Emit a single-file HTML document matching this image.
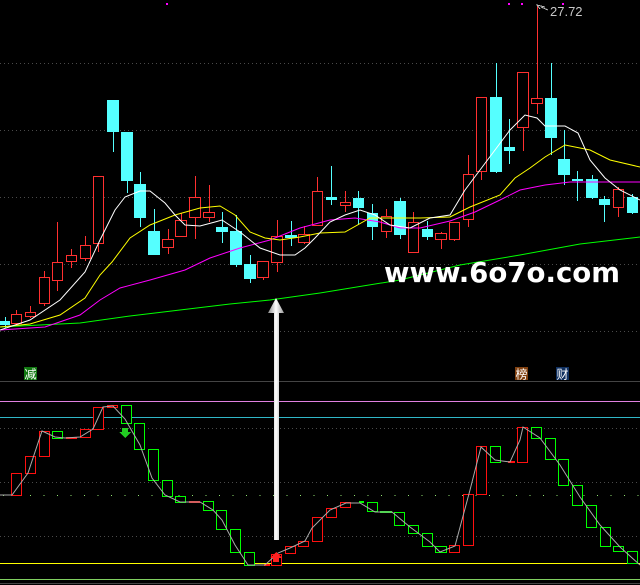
<!DOCTYPE html>
<html><head><meta charset="utf-8"><style>
html,body{margin:0;padding:0;background:#000;width:640px;height:585px;overflow:hidden}
svg{display:block}
</style></head><body>
<svg id="s" width="640" height="585" viewBox="0 0 640 585" xmlns="http://www.w3.org/2000/svg" shape-rendering="crispEdges">
<rect width="640" height="585" fill="#000"/>
<g id="grid" stroke="#4a4a4a" stroke-dasharray="1 3" stroke-width="1">
<line x1="0" y1="63.5" x2="640" y2="63.5"/><line x1="0" y1="130.5" x2="640" y2="130.5"/><line x1="0" y1="197.5" x2="640" y2="197.5"/><line x1="0" y1="264.5" x2="640" y2="264.5"/><line x1="0" y1="331.5" x2="640" y2="331.5"/>
<line x1="0" y1="428.5" x2="640" y2="428.5"/><line x1="0" y1="482.5" x2="640" y2="482.5"/><line x1="0" y1="536.5" x2="640" y2="536.5"/>
</g>
<rect x="0" y="381" width="640" height="1" fill="#444"/>
<rect x="0" y="401" width="640" height="1" fill="#e080e0"/>
<rect x="0" y="417" width="640" height="1" fill="#30b8c8"/>
<line x1="0" y1="495.5" x2="640" y2="495.5" stroke="#90e070" stroke-dasharray="1 12.5" stroke-dashoffset="-30"/>
<rect x="0" y="563" width="640" height="1" fill="#ffff00"/>
<rect x="0" y="579" width="640" height="1" fill="#80d060"/>
<rect x="0" y="583" width="640" height="1" fill="#444"/>
<g id="c"></g>
<g fill="none" stroke-width="1" shape-rendering="auto">
<polyline stroke="#00ff00" points="0,327 80,323 130,316 180,310 230,304 270,300 320,293 400,280 460,265 520,255 580,244 640,237"/>
<polyline stroke="#ff00ff" points="0,330 45,327 80,315 100,300 120,288 150,280 185,270 210,258 240,248 270,240 300,228 330,220 355,218 380,222 400,228 420,228 450,221 475,212 500,200 520,190 545,185 570,182 640,182"/>
<polyline stroke="#ffff00" points="0,327 30,324 60,315 85,298 100,275 112,262 130,238 150,225 175,215 200,208 220,206 235,215 250,232 265,238 280,240 300,237 320,233 345,232 370,218 390,218 420,218 450,217 470,207 500,195 515,178 530,168 545,157 565,145 590,150 610,160 640,167"/>
<polyline stroke="#ffffff" points="0,330 30,320 60,300 85,272 100,240 115,210 125,197 140,191 150,191 165,203 175,215 185,225 200,226 215,222 222,220 240,232 260,248 280,255 295,255 305,248 315,238 330,222 345,215 360,210 375,215 390,225 410,228 430,218 450,215 465,190 480,170 495,150 510,130 525,115 537,118 545,126 565,126 578,133 590,160 605,178 620,190 640,200"/>
<polyline stroke="#aaaaaa" points="0,495 12,495 28,473 42,431 55,437 65,438 80,437 93,429 103,407 113,406 125,419 140,445 152,478 165,495 180,502 200,502 213,510 222,520 235,545 248,565 265,565 278,553 290,548 305,541 312,528 330,510 346,503 360,503 375,512 392,512 410,527 430,542 440,552 455,546 470,490 481,447 495,460 510,462 520,440 523,427 540,438 560,465 580,497 600,525 620,547 640,565"/>
</g>
<g fill="#ff00ff"><rect x="166" y="3" width="2" height="2"/><rect x="508" y="3" width="2" height="2"/><rect x="521" y="3" width="2" height="2"/><rect x="562" y="3" width="2" height="2"/></g>
<polyline points="545,7 537,5 540,9" fill="none" stroke="#bbb"/>
<line x1="541" y1="7" x2="548" y2="10" stroke="#bbb"/>
<text x="550" y="16" font-family="Liberation Sans, sans-serif" font-size="13" fill="#c8c8c8">27.72</text>
<text x="384" y="282" font-family="DejaVu Sans, sans-serif" font-weight="bold" font-size="28" fill="#fff" textLength="236" lengthAdjust="spacingAndGlyphs">www.6o7o.com</text>
<defs><linearGradient id="ag" x1="0" x2="1"><stop offset="0" stop-color="#888"/><stop offset=".5" stop-color="#fff"/><stop offset="1" stop-color="#999"/></linearGradient></defs>
<polygon points="276,298 284,313 279,313 279,540 274,540 274,313 268,313" fill="url(#ag)" shape-rendering="auto"/>
<path d="M122,428h6v4h3l-6,6l-6,-6h3z" fill="#22cc22"/>
<path d="M273,562v-4h-3l6,-6l6,6h-3v4z" fill="#ff2020"/>
<g font-family="Liberation Sans, 'Noto Sans CJK SC', sans-serif" font-size="12" fill="#fff">
<rect x="24" y="367" width="13" height="13" fill="#117711"/><text x="24.5" y="378.5">减</text>
<rect x="515" y="367" width="13" height="13" fill="#804010"/><text x="515.5" y="378.5">榜</text>
<rect x="556" y="367" width="13" height="13" fill="#103060"/><text x="556.5" y="378.5">财</text>
</g>
</svg>
<script>
(function(){
var R='#ff3030',C='#55ffff',G='#00ff00',RB='#ff1010';
var tp=[
['c',0,9,321,324,317,327],['r',11,21,314,323,310,323],['r',25,35,312,316,306,317],['r',39,49,277,303,271,305],['r',52,62,262,280,222,290],['r',66,76,255,261,249,267],['r',80,90,245,258,236,260],['r',93,103,176,243,176,251],['c',107,118,100,131,100,151],['c',121,132,132,180,132,192],['c',134,145,184,217,172,226],['c',148,159,231,254,209,254],['r',162,173,239,247,229,253],['r',175,186,220,236,213,236],['r',189,200,197,217,176,238],['r',203,214,212,217,185,221],['c',216,227,227,231,212,242],['c',230,241,231,264,215,266],['c',244,255,264,278,255,282],['r',257,268,261,277,261,279],['r',271,282,236,262,220,271],['c',285,296,235,237,221,245],['r',298,309,234,242,226,243],['r',312,322,191,225,177,225],['c',326,336,197,199,166,204],['r',340,350,202,205,191,211],['c',353,363,198,207,191,224],['c',367,377,213,226,204,239],['r',381,391,216,231,209,237],['c',394,405,201,234,198,238],['r',408,418,222,252,212,252],['c',422,432,229,236,221,239],['r',435,446,233,239,232,248],['r',449,459,222,239,222,240],['r',463,473,174,219,155,226],['r',476,486,97,171,97,179],['c',490,501,97,171,63,172],['c',504,514,147,150,119,163],['r',517,528,72,127,72,150],['r',531,542,98,103,5,113],['c',545,556,98,137,63,154],['c',558,569,159,174,130,184],['c',572,582,179,180,171,200],['c',586,597,179,197,175,198],['c',599,609,199,204,196,221],['r',613,623,189,207,187,216],['c',627,637,197,212,194,213]];
var bt=[['r',11,21,473,495],['r',25,35,456,473],['r',39,49,431,456],['g',52,62,431,438],['f',66,76,438],['r',80,90,429,437],['r',93,103,407,429],['r',107,117,405,407],['g',121,131,405,423],['g',134,144,423,449],['g',148,158,449,480],['g',162,172,480,496],['g',175,185,496,502],['f',189,199,502],['g',203,213,501,510],['g',216,226,510,529],['g',230,240,529,552],['g',244,254,552,565],['f',264,269,565],['r',271,281,554,565],['r',285,295,546,553],['r',298,308,541,546],['r',312,322,517,541],['r',326,336,508,517],['r',340,350,502,507],['gf',359,363,502],['g',367,377,502,511],['gf',380,391,512],['g',394,404,512,525],['g',408,418,525,533],['g',422,432,533,546],['g',435,446,546,552],['r',449,459,545,552],['r',463,473,494,545],['r',476,486,446,494],['g',490,500,446,462],['f',508,514,462],['r',517,527,427,462],['g',531,541,427,438],['g',545,555,438,459],['g',558,568,459,485],['g',572,582,485,505],['g',586,596,505,527],['g',600,610,527,546],['g',613,623,546,551],['g',627,637,551,563]];
var NS='http://www.w3.org/2000/svg',g=document.getElementById('c');
function el(n,a){var e=document.createElementNS(NS,n);for(var k in a)e.setAttribute(k,a[k]);g.appendChild(e);}
function box(x1,x2,y1,y2,col){var w=x2-x1+1,h=y2-y1+1;
 el('rect',{x:x1,y:y1,width:w,height:h,fill:col});
 if(w>2&&h>2)el('rect',{x:x1+1,y:y1+1,width:w-2,height:h-2,fill:'#000'});}
tp.forEach(function(k){var m=Math.round((k[1]+k[2])/2);
 var col=k[0]=='r'?R:C;
 el('rect',{x:m,y:k[5],width:1,height:k[6]-k[5]+1,fill:col});
 var y2=Math.max(k[4],k[3]+1);
 if(k[0]=='r')box(k[1],k[2],k[3],y2,R);
 else el('rect',{x:k[1],y:k[3],width:k[2]-k[1]+1,height:y2-k[3]+1,fill:C});});
bt.forEach(function(k){
 if(k[0]=='f'||k[0]=='gf')el('rect',{x:k[1],y:k[3]-1,width:k[2]-k[1]+1,height:2,fill:(k[0]=='f'?RB:G)});
 else box(k[1],k[2],k[3],k[4],k[0]=='r'?RB:G);});
})();
</script>
</body></html>
